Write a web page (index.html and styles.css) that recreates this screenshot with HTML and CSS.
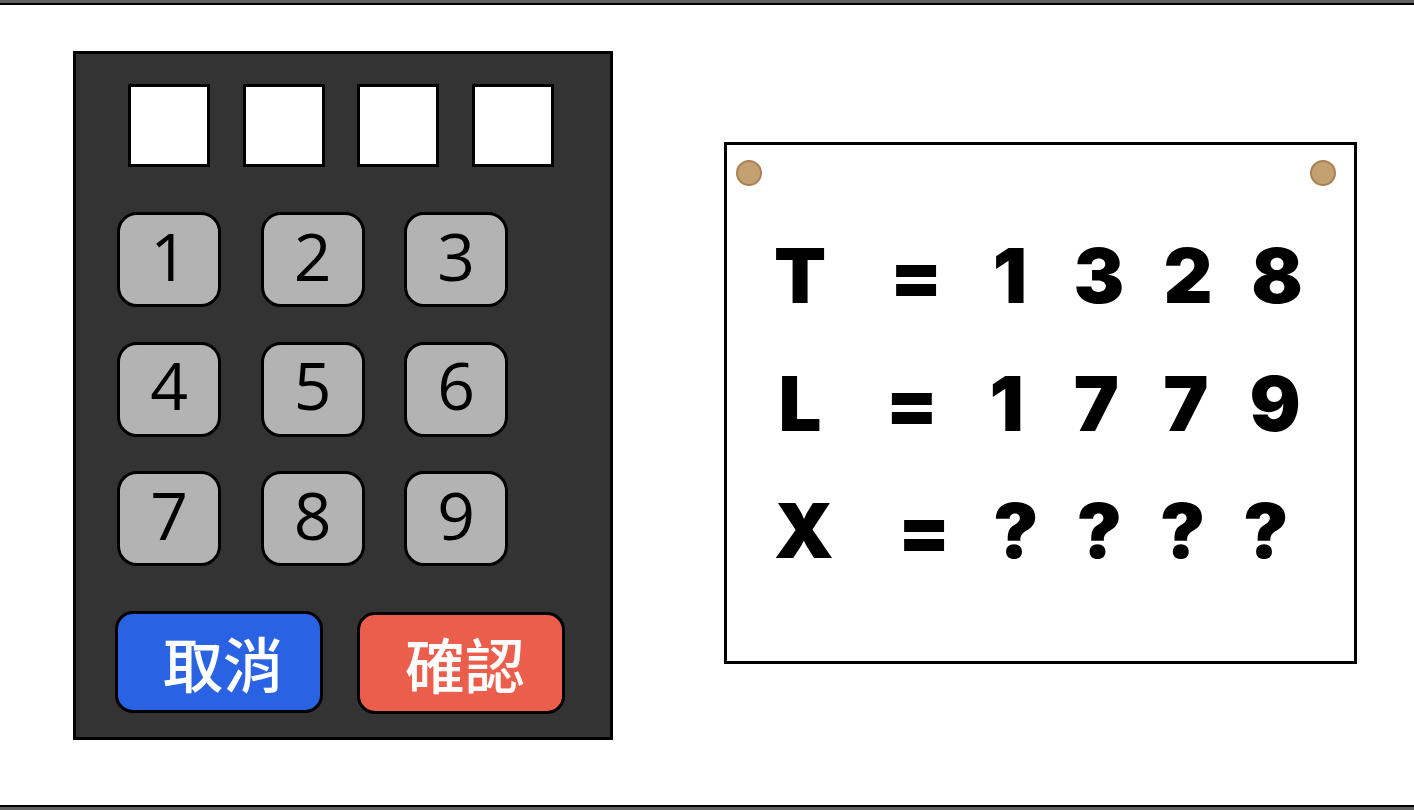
FILE: index.html
```html
<!DOCTYPE html>
<html lang="zh-Hant">
<head>
<meta charset="utf-8">
<title>密碼鎖</title>
<link rel="stylesheet" href="styles.css">
</head>
<body>
<div class="frame">
  <div class="stage">
    <div class="keypad">
      <div class="slots">
        <div class="slot"></div>
        <div class="slot"></div>
        <div class="slot"></div>
        <div class="slot"></div>
      </div>
      <div class="keys">
        <div class="key">1</div>
        <div class="key">2</div>
        <div class="key">3</div>
        <div class="key">4</div>
        <div class="key">5</div>
        <div class="key">6</div>
        <div class="key">7</div>
        <div class="key">8</div>
        <div class="key">9</div>
      </div>
      <div class="actions">
        <div class="btn btn-cancel">取消</div>
        <div class="btn btn-confirm">確認</div>
      </div>
    </div>
    <div class="sign">
      <span class="pin pin-left"></span>
      <span class="pin pin-right"></span>
      <div class="row row-t">
        <span>T</span><span>=</span><span>1</span><span>3</span><span>2</span><span>8</span>
      </div>
      <div class="row row-l">
        <span>L</span><span>=</span><span>1</span><span>7</span><span>7</span><span>9</span>
      </div>
      <div class="row row-x">
        <span>X</span><span>=</span><span>?</span><span>?</span><span>?</span><span>?</span>
      </div>
    </div>
  </div>
</div>
</body>
</html>
```

FILE: styles.css
```css
* { box-sizing: border-box; }
html, body { margin: 0; padding: 0; background: #fff; }
body { width: 1414px; height: 810px; overflow: hidden; }

.frame {
  height: 810px;
  border-top: 3px solid #606060;
  border-bottom: 3px solid #606060;
}
.stage {
  height: 804px;
  border-top: 2px solid #000;
  border-bottom: 2px solid #000;
  display: flex;
  align-items: flex-start;
  padding-left: 73px;
}

/* keypad */
.keypad {
  margin-top: 46px;
  width: 540px;
  height: 689px;
  background: #333333;
  border: 3px solid #000;
  display: flex;
  flex-direction: column;
  padding-top: 30px;
}
.slots {
  display: flex;
  gap: 32.67px;
  padding-left: 52px;
}
.slot {
  width: 82px;
  height: 83px;
  background: #fff;
  border: 3px solid #000;
}
.keys {
  margin-top: 45px;
  padding-left: 41px;
  display: grid;
  grid-template-columns: repeat(3, 104px);
  grid-auto-rows: 95px;
  column-gap: 39.5px;
  row-gap: 34.5px;
}
.key {
  background: #b3b3b3;
  border: 3px solid #000;
  border-radius: 20px;
  display: flex;
  align-items: center;
  justify-content: center;
  font-family: "Open Sans", "Noto Sans", sans-serif;
  font-weight: 400;
  font-size: 66px;
  line-height: 1;
  color: #000;
  padding-bottom: 10px;
}
.actions {
  margin-top: 45px;
  padding-left: 39px;
  display: flex;
  gap: 34px;
}
.btn {
  width: 208px;
  height: 102px;
  border: 3px solid #000;
  border-radius: 18px;
  display: flex;
  align-items: center;
  justify-content: center;
  color: #fff;
  font-family: "Noto Sans CJK TC", "Noto Sans CJK SC", sans-serif;
  font-weight: 500;
  font-size: 60px;
  line-height: 1;
  padding-left: 8px;
}
.btn-cancel { background: #2962e2; }
.btn-confirm { background: #ec5e4c; margin-top: 1px; }

/* sign */
.sign {
  position: relative;
  margin-top: 137px;
  margin-left: 111px;
  width: 633px;
  height: 522px;
  background: #fff;
  border: 3px solid #000;
  padding-top: 67px;
}
.pin {
  position: absolute;
  top: 15px;
  width: 26px;
  height: 26px;
  border-radius: 50%;
  background: #c3a070;
  border: 2px solid #a88256;
}
.pin-left { left: 9px; }
.pin-right { right: 18px; }

.row {
  display: grid;
  height: 127.5px;
  line-height: 127.5px;
  font-family: "Inter", "Roboto", sans-serif;
  font-weight: 900;
  font-size: 76px;
  color: #000;
  text-align: center;
}
.row span { display: block; }
.row-t { margin-left: 6.5px; grid-template-columns: 133px 99px repeat(4, 89px); }
.row-l { margin-left: 11.5px; grid-template-columns: 123px 100.5px repeat(4, 89.5px); }
.row-x { margin-left: 7.3px; grid-template-columns: 139.4px 100.6px repeat(4, 83.3px); }
```
